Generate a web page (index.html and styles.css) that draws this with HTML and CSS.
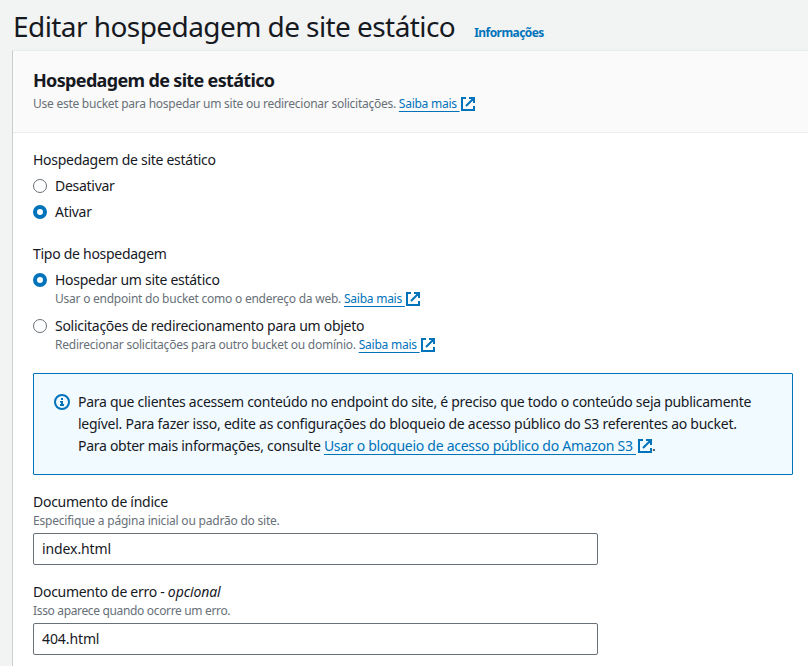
FILE: index.html
```html
<!DOCTYPE html>
<html lang="pt-BR">
<head>
<meta charset="utf-8">
<title>Editar hospedagem de site estático</title>
<link rel="stylesheet" href="styles.css">
</head>
<body>
<svg class="defs" width="0" height="0"><defs>
<symbol id="ext" viewBox="0 0 16 16"><path d="M6 2H2v12h12v-4M9 2h5v5M6 10l7.500-7.500" fill="none" stroke="currentColor" stroke-width="2"/></symbol>
</defs></svg>
<header class="page-header"><h1>Editar hospedagem de site estático</h1><a class="info">Informações</a></header>
<main class="panel">
  <div class="panel-head">
    <h2>Hospedagem de site estático</h2>
    <p class="hint">Use este bucket para hospedar um site ou redirecionar solicitações. <a class="link">Saiba mais <svg class="ext"><use href="#ext"/></svg></a></p>
  </div>
  <div class="panel-body">
    <section class="group">
      <div class="label">Hospedagem de site estático</div>
      <div class="option"><i class="radio"></i><div>Desativar</div></div>
      <div class="option"><i class="radio on"></i><div>Ativar</div></div>
    </section>
    <section class="group type">
      <div class="label">Tipo de hospedagem</div>
      <div class="option"><i class="radio on"></i><div>Hospedar um site estático<p class="hint">Usar o endpoint do bucket como o endereço da web. <a class="link">Saiba mais <svg class="ext"><use href="#ext"/></svg></a></p></div></div>
      <div class="option"><i class="radio"></i><div>Solicitações de redirecionamento para um objeto<p class="hint">Redirecionar solicitações para outro bucket ou domínio. <a class="link">Saiba mais <svg class="ext"><use href="#ext"/></svg></a></p></div></div>
    </section>
    <div class="alert">
      <svg class="info-icon" viewBox="0 0 16 16"><circle cx="8" cy="8" r="7" fill="none" stroke="currentColor" stroke-width="2"/><path d="M7 4h2v2H7zM6 7h3v3h1v2H6v-2h1V8.500H6z" fill="currentColor"/></svg>
      <p><span class="line1">Para que clientes acessem conteúdo no endpoint do site, é preciso que todo o conteúdo seja publicamente</span><br><span class="line2">legível. Para fazer isso, edite as configurações do bloqueio de acesso público do S3 referentes ao bucket.</span><br>Para obter mais informações, consulte <a class="link">Usar o bloqueio de acesso público do Amazon S3 <svg class="ext"><use href="#ext"/></svg></a>.</p>
    </div>
    <label class="field"><span class="label">Documento de índice</span><span class="hint">Especifique a página inicial ou padrão do site.</span><input type="text" value="index.html"></label>
    <label class="field"><span class="label">Documento de erro - <em>opcional</em></span><span class="hint error-hint">Isso aparece quando ocorre um erro.</span><input type="text" value="404.html"></label>
  </div>
</main>
</body>
</html>
```
FILE: styles.css
```css
* { box-sizing: border-box; }
body { margin: 0; height: 666px; overflow: hidden; background: #f2f3f3; color: #16191f; font: 14px/22px "Noto Sans", sans-serif; letter-spacing: -0.28px; }
h1, h2, p { margin: 0; }
.defs { display: block; }
.page-header { height: 50px; padding: 8px 0 0 13px; display: flex; align-items: baseline; gap: 19px; }
h1 { font-size: 28px; line-height: 36px; font-weight: 400; letter-spacing: -0.57px; }
.info { font-size: 12px; font-weight: 700; color: #0073bb; letter-spacing: -0.56px; }
.panel { margin-left: 12px; height: 616px; background: #fff; border-left: 1px solid #c9cfcf; border-top: 1px solid #eaeded; }
.panel-head { height: 82px; padding: 18px 20px; background: #fafafa; border-bottom: 1px solid #eaeded; }
h2 { font-size: 18px; line-height: 22px; font-weight: 700; letter-spacing: -0.66px; }
.hint { font-size: 12px; line-height: 16px; color: #687078; letter-spacing: -0.24px; }
.panel-head .hint { margin-top: 5px; letter-spacing: -0.255px; }
.link { color: #0073bb; text-decoration: underline; text-underline-offset: 3px; text-decoration-skip-ink: none; }
.ext { width: 16px; height: 16px; vertical-align: -1px; margin: -3px 0; }
.panel-body { padding: 16px 15px 0 20px; }
.group { height: 94px; }
.type { height: 130px; }
.option { display: flex; margin-top: 4px; }
.type .option + .option { margin-top: 8px; }
.option > div { margin-left: 8px; }
.radio { width: 14px; height: 14px; margin-top: 4px; border: 1px solid #687078; border-radius: 50%; background: #fff; flex: none; }
.radio.on { border: 4px solid #0073bb; }
.alert { display: flex; height: 102px; padding: 17px 20px; border: 1px solid #0073bb; border-radius: 1px; background: #f1faff; }
.alert p { white-space: nowrap; }
.alert .line2 { letter-spacing: -0.255px; }
.alert .ext { vertical-align: 0; margin-left: 1px; margin-right: -1px; }
.info-icon { width: 16px; height: 16px; margin: 3px 8px 0 0; color: #0073bb; flex: none; }
.field { display: block; height: 90px; }
.alert + .field { margin-top: 16px; }
.field > span { display: block; }
.field em { letter-spacing: -0.1px; }
.field .hint { letter-spacing: -0.21px; }
.field .error-hint { letter-spacing: -0.34px; }
.field input { width: 565px; height: 32px; margin-top: 4px; padding: 3px 8px 5px; border: 1px solid #687078; border-radius: 2px; background: #fff; color: #16191f; font: inherit; letter-spacing: -0.1px; display: block; }
```
